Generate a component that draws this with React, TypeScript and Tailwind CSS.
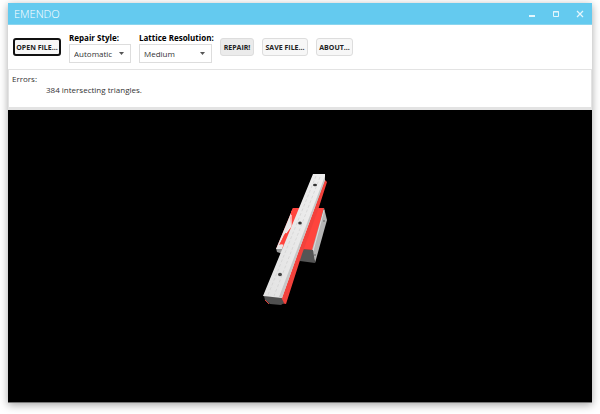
import { ReactNode } from "react";

function ToolButton({ children, className }: { children: ReactNode; className: string }) {
  return (
    <button
      type="button"
      className={`h-[18px] shrink-0 rounded-[3px] text-center text-[7px] leading-none font-bold whitespace-nowrap text-[#222222] ${className}`}
    >
      {children}
    </button>
  );
}

function Dropdown({ id, label, options, className }: { id: string; label: string; options: string[]; className: string }) {
  return (
    <div className={`flex shrink-0 flex-col ${className}`}>
      <label htmlFor={id} className="h-3 text-[8px] leading-3 font-bold whitespace-nowrap text-black">
        {label}
      </label>
      <div className="relative">
        <select
          id={id}
          className="block h-[19px] w-full appearance-none border border-[#dddddd] bg-white pt-px pl-1 text-[8px] text-[#333333]"
        >
          {options.map((option) => (
            <option key={option}>{option}</option>
          ))}
        </select>
        <svg viewBox="0 0 5 3" className="pointer-events-none absolute top-2 right-[7px] h-[3px] w-[5px]" fill="#555555">
          <path d="M0 0h5L2.5 3z" />
        </svg>
      </div>
    </div>
  );
}

function Model() {
  return (
    <svg viewBox="8 110 584 292" className="h-[292px] w-full" role="img" aria-label="Rail and carriage">
      <defs>
        <linearGradient id="rail" x1="0" y1="0" x2="1" y2="0">
          <stop offset="0" stopColor="#e2e2e2" />
          <stop offset="1" stopColor="#efefef" />
        </linearGradient>
      </defs>
      {/* carriage */}
      <path d="M293 208 324 208 313 250 276 249z" fill="#ff443d" />
      <path d="M324 208 327 220 315 263 312 250z" fill="#b5b5b5" />
      <path d="M324 210 313 251" stroke="#e6e6e6" strokeWidth=".8" />
      <circle cx="324" cy="221" r=".7" fill="#444444" />
      <circle cx="315" cy="255" r=".7" fill="#444444" />
      <path d="M299 249 313 250 315 263 300 261z" fill="#555555" />
      <path d="M276 248 285 248 283 254 277 252z" fill="#999999" />
      <path d="M293 208 290 218 291 226 285 234 279 245 284 243 282 249 276 249z" fill="#e8e8e8" />
      <path d="M291 212 293 208 299 208 290 231 285 245 280 244 284 235 291 227z" fill="#ff443d" />
      <path d="M291 215 291 226 286 233" fill="none" stroke="#f4f4f4" strokeWidth="1.2" />
      {/* rail */}
      <path d="M325 180 327 182 319 207 302 254 286 304 281 303 281 296z" fill="#f2423c" />
      <path d="M264 296 281 297 284 303 281 305 270 304 265 300z" fill="#505050" />
      <path d="M265 300 269 304" stroke="#e23c36" />
      <path d="M313 174 325 174 325 180 298 253 282 298 263 296z" fill="url(#rail)" />
      <path d="M325 176 325 180 298 253 282 298 279 297z" fill="#c8c8c8" />
      <path d="M316 176 268 295M320 177 274 296" stroke="#cccccc" strokeWidth=".6" strokeDasharray="3 2" />
      <ellipse cx="315" cy="185" rx="2" ry="1.2" fill="#333333" />
      <ellipse cx="300" cy="223" rx="1.8" ry="1.6" fill="#333333" />
      <ellipse cx="280" cy="274.500" rx="2" ry="1.8" fill="#444444" />
    </svg>
  );
}

export default function App() {
  return (
    <div className="bg-white px-2 pt-[3px] pb-3 font-['Open_Sans','Noto_Sans',sans-serif]">
      <main className="bg-white shadow-[0_2px_8px_rgba(0,0,0,0.35)]">
        <header className="flex h-[22px] items-center justify-between border-b border-[#8bd5ee] bg-[#64caef] px-[6px] text-[#e3f6fd]">
          <h1 className="text-[11px] leading-none font-light text-white">EMENDO</h1>
          <div className="flex gap-3">
            <button type="button" aria-label="Minimize" className="size-3">
              <svg viewBox="0 0 12 12" className="size-3" fill="currentColor">
                <path d="M3 7h6v2H3z" />
              </svg>
            </button>
            <button type="button" aria-label="Maximize" className="size-3">
              <svg viewBox="0 0 12 12" className="size-3" fill="none" stroke="currentColor">
                <path d="M3.500 3.500h5v5h-5zM3 4h6" />
              </svg>
            </button>
            <button type="button" aria-label="Close" className="size-3">
              <svg viewBox="0 0 12 12" className="size-3" fill="none" stroke="currentColor" strokeWidth="1.300">
                <path d="m3 3 6 6M9 3 3 9" />
              </svg>
            </button>
          </div>
        </header>

        <div className="flex h-11 items-center pl-[5px]">
          <ToolButton className="w-12 border-2 border-[#111111] bg-[#f7f7f7]">OPEN FILE...</ToolButton>
          <Dropdown id="style" label="Repair Style:" options={["Automatic", "Manual"]} className="ml-2 w-[62px]" />
          <Dropdown id="resolution" label="Lattice Resolution:" options={["Medium", "Low", "High"]} className="ml-2 w-[73px]" />
          <ToolButton className="ml-2 w-[34px] border border-[#dddddd] bg-[#ebebeb]">REPAIR!</ToolButton>
          <ToolButton className="ml-2 w-[46px] border border-[#dddddd] bg-[#f7f7f7]">SAVE FILE...</ToolButton>
          <ToolButton className="ml-2 w-[37px] border border-[#dddddd] bg-[#f7f7f7]">ABOUT...</ToolButton>
        </div>

        <section className="h-[41px] border-x border-t border-b-3 border-[#e3e3e3] px-[3px] pt-[3px] text-[8px] leading-[11px] text-[#333333]">
          <h2>Errors:</h2>
          <p className="pl-[34px]">384 intersecting triangles.</p>
        </section>

        <div className="border-b border-[#777777] bg-black">
          <Model />
        </div>
      </main>
    </div>
  );
}
